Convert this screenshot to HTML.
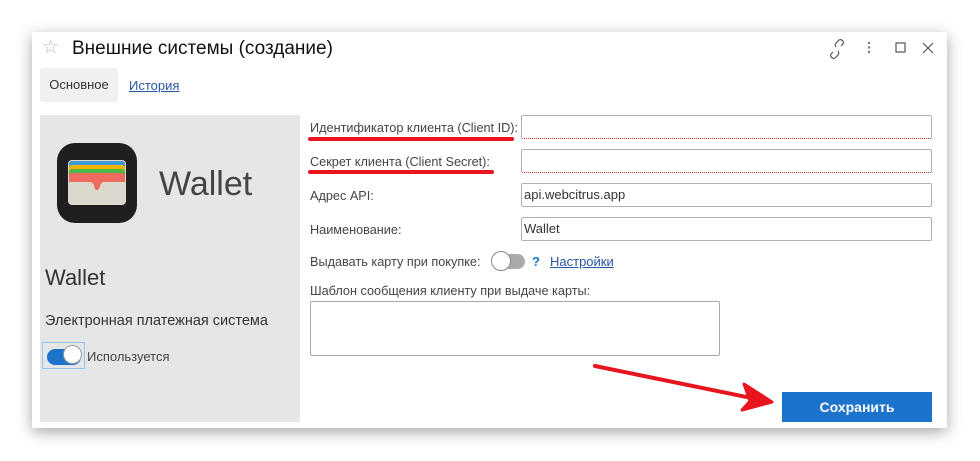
<!DOCTYPE html>
<html><head><meta charset="utf-8"><style>
*{box-sizing:border-box;margin:0;padding:0}
body{width:980px;height:461px;background:#fff;font-family:"Liberation Sans",Arial,sans-serif;color:#333;position:relative;overflow:hidden}
.win{position:absolute;left:32px;top:32px;width:915px;height:396px;background:#fff;box-shadow:0 4px 14px rgba(0,0,0,.35)}
.abs{position:absolute}
.title{left:40px;top:6px;font-size:19px;color:#111}
.tab1{left:8px;top:36px;width:78px;height:34px;background:#f0f0f0;border-radius:3px;font-size:13px;line-height:34px;text-align:center;color:#333}
.tab2{left:97px;top:46px;font-size:13px;color:#2855a6;text-decoration:underline}
.left{left:8px;top:83px;width:260px;height:307px;background:#e6e6e6}
.lbl{font-size:12.7px;color:#444}
.inp{position:absolute;left:489px;width:411px;height:24px;border:1px solid #b0b0b0;border-radius:2px;background:#fff;font-size:13px;line-height:22px;padding-left:2px;color:#333}
.req{border-bottom:1px dotted #d02020}
.btn{left:750px;top:360px;width:150px;height:30px;background:#1b73cc;color:#fff;font-weight:bold;font-size:14px;text-align:center;line-height:30px}
</style></head><body>
<div class="win">
 <div class="abs" style="left:10px;top:4px;font-size:19px;color:#bbb">☆</div>
 <div class="abs title">Внешние системы (создание)</div>
 <svg class="abs" style="left:795px;top:6px" width="110" height="22" viewBox="0 0 110 22">
  <g fill="none" stroke="#555" stroke-width="1.2">
   <path d="M6 14 l-2 2 a3 3 0 0 0 4 4 l3-3 a3 3 0 0 0 0-4"/><path d="M14 8 l2-2 a3 3 0 0 0 -4-4 l-3 3 a3 3 0 0 0 0 4"/>
   <rect x="69" y="5" width="9" height="9"/>
   <path d="M96 5 l10 10 M106 5 l-10 10"/>
  </g>
  <g fill="#777"><circle cx="42" cy="5" r="1.2"/><circle cx="42" cy="9.5" r="1.2"/><circle cx="42" cy="14" r="1.2"/></g>
 </svg>
 <div class="abs tab1">Основное</div>
 <div class="abs tab2">История</div>
 <div class="abs left">
  <svg class="abs" style="left:17px;top:28px" width="80" height="80" viewBox="0 0 80 80">
   <rect x="0" y="0" width="80" height="80" rx="18" fill="#1f1f1f"/>
   <rect x="11" y="17" width="58" height="45" rx="4" fill="#dbd8cd"/>
   <rect x="12" y="18" width="56" height="12" rx="3" fill="#3e9bd6"/>
   <rect x="12" y="22" width="56" height="12" rx="3" fill="#f4b400"/>
   <rect x="12" y="26" width="56" height="12" rx="3" fill="#4cb848"/>
   <path d="M12 33 a3 3 0 0 1 3-3 h50 a3 3 0 0 1 3 3 v6 h-21 q-3 0 -4 4 q-1 4 -3 4 q-2 0 -3-4 q-1-4 -4-4 h-21 z" fill="#ef6b60"/>
  </svg>
  <div class="abs" style="left:119px;top:50px;font-size:34px;color:#444;font-weight:300">Wallet</div>
  <div class="abs" style="left:5px;top:150px;font-size:22px;color:#333">Wallet</div>
  <div class="abs" style="left:5px;top:198px;font-size:14.5px;color:#333">Электронная платежная система</div>
  <div class="abs" style="left:2px;top:227px;width:43px;height:27px;border:1px solid #9cc3ee"></div>
  <div class="abs" style="left:7px;top:234px;width:34px;height:16px;border-radius:8px;background:#1b73cc"></div>
  <div class="abs" style="left:23px;top:230px;width:19px;height:19px;border-radius:50%;background:#fff;border:1px solid #999"></div>
  <div class="abs" style="left:47px;top:234px;font-size:13px;color:#444">Используется</div>
 </div>
 <div class="abs lbl" style="left:278px;top:89px">Идентификатор клиента (Client ID):</div>
 <div class="inp req" style="top:83px"></div>
 <div class="abs lbl" style="left:278px;top:123px">Секрет клиента (Client Secret):</div>
 <div class="inp req" style="top:117px"></div>
 <div class="abs lbl" style="left:278px;top:157px">Адрес API:</div>
 <div class="inp" style="top:151px">api.webcitrus.app</div>
 <div class="abs lbl" style="left:278px;top:191px">Наименование:</div>
 <div class="inp" style="top:185px">Wallet</div>
 <div class="abs lbl" style="left:278px;top:223px">Выдавать карту при покупке:</div>
 <div class="abs" style="left:461px;top:222px;width:32px;height:15px;border-radius:8px;background:#aaa"></div>
 <div class="abs" style="left:459px;top:219px;width:20px;height:20px;border-radius:50%;background:#fff;border:1px solid #888"></div>
 <div class="abs" style="left:500px;top:222px;font-size:13px;color:#1b73cc;font-weight:bold">?</div>
 <div class="abs" style="left:518px;top:222px;font-size:13px;color:#2855a6;text-decoration:underline">Настройки</div>
 <div class="abs lbl" style="left:278px;top:252px">Шаблон сообщения клиенту при выдаче карты:</div>
 <div class="abs" style="left:278px;top:269px;width:410px;height:55px;border:1px solid #a8a8a8;border-radius:2px"></div>
 <div class="abs btn">Сохранить</div>
</div>
<svg class="abs" style="left:0;top:0" width="980" height="461">
 <g stroke="#e8141e" stroke-width="4" stroke-linecap="round" fill="none">
  <path d="M310 139 L512 139"/><path d="M310 172 L492 172"/>
  <path d="M595 366 L766 401"/>
 </g>
 <path d="M744 384 L772 402 L742 410 L750 401 Z" fill="#e8141e" stroke="#e8141e" stroke-width="3" stroke-linejoin="round"/>
</svg>
</body></html>
